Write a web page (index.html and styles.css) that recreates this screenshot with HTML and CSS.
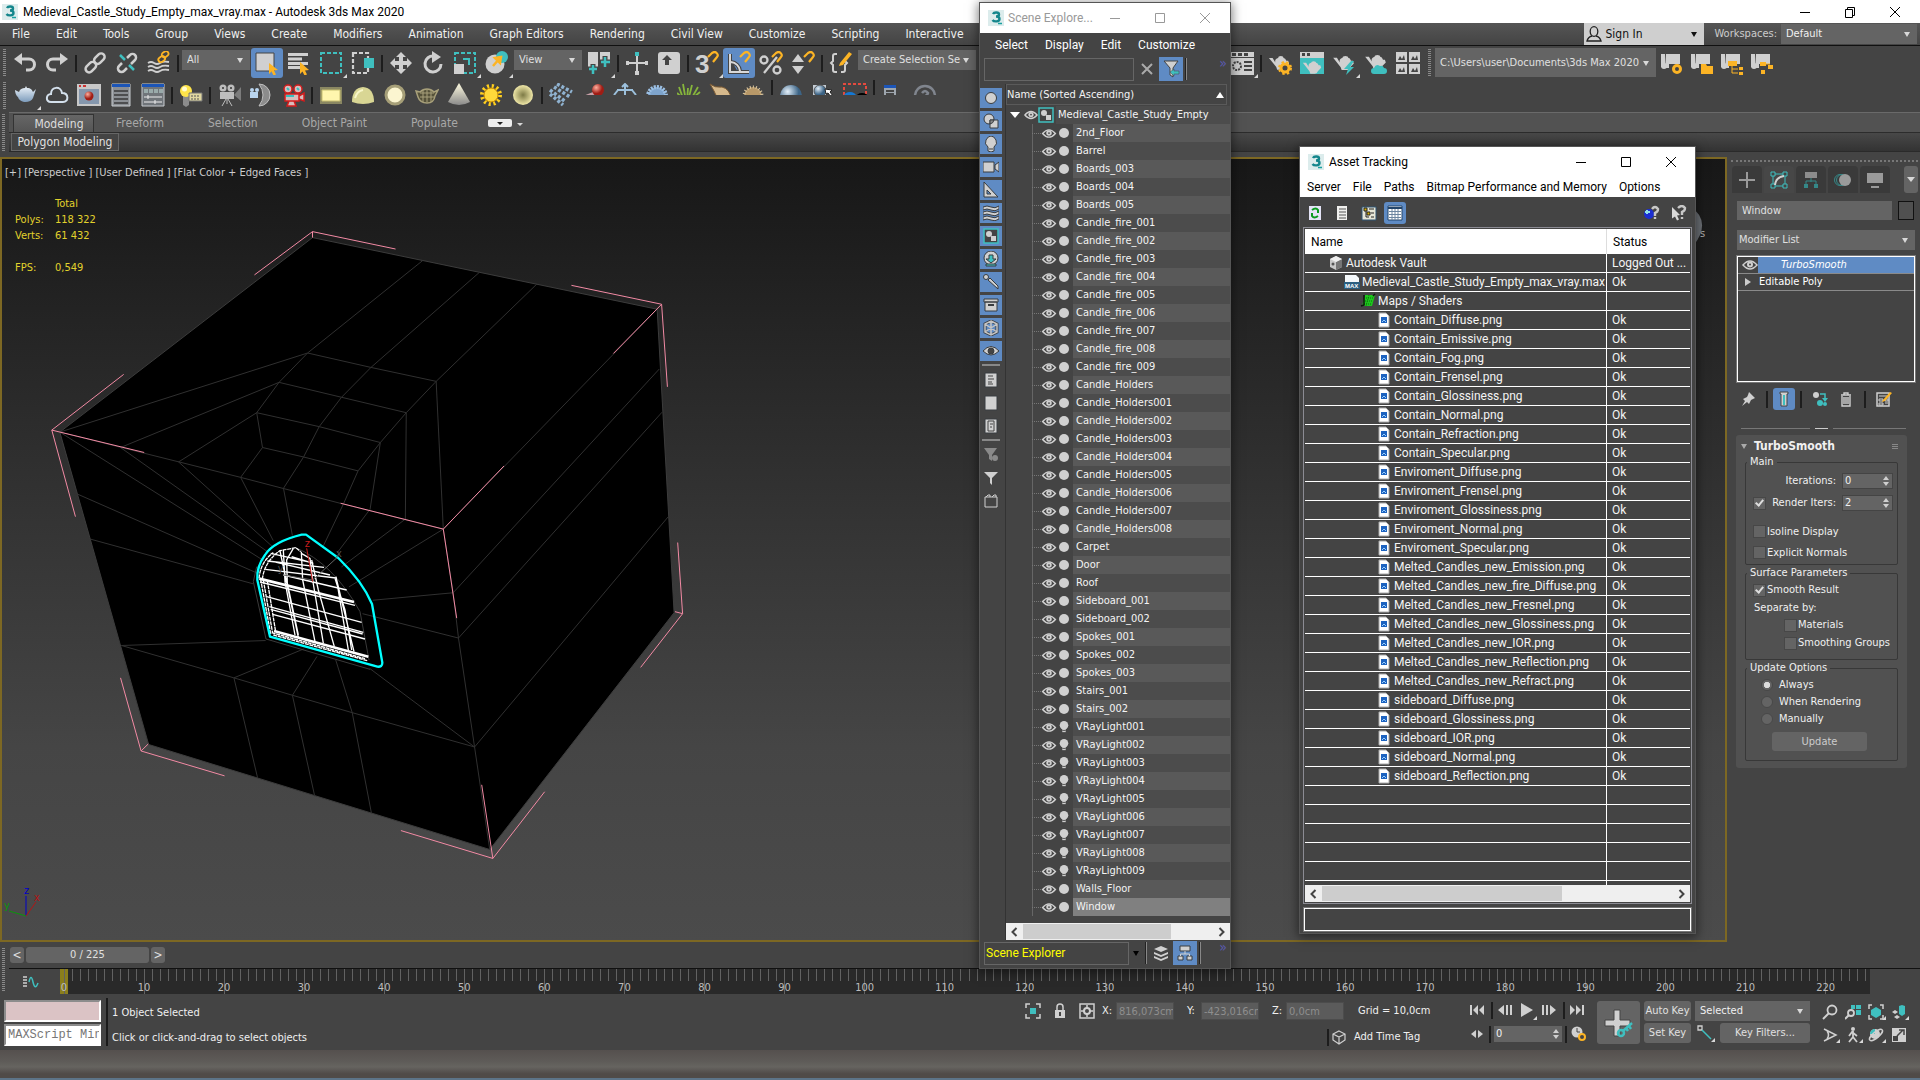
FILE: index.html
```html
<!DOCTYPE html>
<html lang="en">

<head>
    <meta charset="UTF-8">
    <meta name="viewport" content="width=device-width, initial-scale=1.0">
    <title>Medieval_Castle_Study_Empty_max_vray.max - Autodesk 3ds Max 2020</title>
    <link rel="stylesheet" href="styles.css">
</head>

<body>
    <!-- icon sprite -->
    <svg class="sprite" aria-hidden="true">
        <defs>
            <radialGradient id="g-ball" cx="35%" cy="30%"><stop offset="0" stop-color="#e4f0fa"/><stop offset="1" stop-color="#3c6486"/></radialGradient>
            <radialGradient id="g-red" cx="35%" cy="30%"><stop offset="0" stop-color="#ffb0a0"/><stop offset="1" stop-color="#a01c14"/></radialGradient>
            <radialGradient id="g-glow"><stop offset="0" stop-color="#7d7a45"/><stop offset="1" stop-color="#efe7a8"/></radialGradient>
            <linearGradient id="g-cone" x2="0" y2="1"><stop offset="0" stop-color="#fffbe0"/><stop offset="1" stop-color="#8a8a8a"/></linearGradient>
            <linearGradient id="g-metal" x2="0" y2="1"><stop offset="0" stop-color="#eef4fa"/><stop offset="1" stop-color="#7d9cbc"/></linearGradient>
        </defs>
        <symbol id="max" viewBox="0 0 16 16"><rect width="16" height="16" fill="#dcecec"/><path d="M5 4c1-2 6-2 6 .5C11 6 9.500 6.500 8 6.500c2 0 3.500.5 3.500 2.500 0 3-5.500 3-7 1" fill="none" stroke="#14868c" stroke-width="2.400"/><path d="M10 13.500h4" stroke="#1aa0a0" stroke-width="1.500"/></symbol>
        <symbol id="undo" viewBox="0 0 24 24"><path d="M6 8h10a4.500 4.500 0 010 11h-3" fill="none" stroke="#d0d0d0" stroke-width="3"/><path d="M1 8l8-6v12z" fill="#d0d0d0"/></symbol>
        <symbol id="redo" viewBox="0 0 24 24"><path d="M18 8H8a4.500 4.500 0 000 11h3" fill="none" stroke="#d0d0d0" stroke-width="3"/><path d="M23 8l-8-6v12z" fill="#d0d0d0"/></symbol>
        <symbol id="link" viewBox="0 0 24 24"><g fill="none" stroke="#d0d0d0" stroke-width="2.500"><rect x="-5.500" y="-3.500" width="12" height="7" rx="3.500" transform="translate(16 8) rotate(-45)"/><rect x="-5.500" y="-3.500" width="12" height="7" rx="3.500" transform="translate(7.500 16.500) rotate(-45)"/></g></symbol>
        <symbol id="unlink" viewBox="0 0 24 24"><g fill="none" stroke="#d0d0d0" stroke-width="2.500"><path d="M12 7l3-3a3.500 3.500 0 015 5l-4 4M12 17l-3 3a3.500 3.500 0 01-5-5l3-3"/></g><path d="M5 4l5 5M14 14l5 5" stroke="#3fbfbf" stroke-width="2.500"/></symbol>
        <symbol id="bind" viewBox="0 0 24 24"><g fill="none" stroke="#d0d0d0" stroke-width="1.800"><path d="M1 12q3-2 6 0t6 0 9-1M1 16q3-2 6 0t6 0 9-1M1 20q3-2 6 0t6 0 9-1"/></g><g fill="none" stroke="#fcb425" stroke-width="1.800"><rect x="15" y="1" width="7" height="5" rx="2.500" transform="rotate(-35 18 4)"/><rect x="11" y="6" width="7" height="5" rx="2.500" transform="rotate(-35 14 8)"/></g></symbol>
        <symbol id="select" viewBox="0 0 24 24"><path d="M1 2h18v18H1z" fill="#d0d0d0" stroke="#444"/><path d="M14 12l9 7-4 .5 2 4-2.500 1-2-4-2.500 2.500z" fill="#fcb425"/></symbol>
        <symbol id="byname" viewBox="0 0 24 24"><path d="M1 2h20v3H1zM1 6.500h14v3H1zM1 11h20v3H1zM1 15h12v3H1z" fill="#d0d0d0"/><path d="M13 11l9 8-4 .5 2 4-2.500 1-2-4-2.500 2.500z" fill="#fcb425"/></symbol>
        <symbol id="rect" viewBox="0 0 24 24"><path d="M2 2h20v20H2z" fill="none" stroke="#3fbfbf" stroke-width="2" stroke-dasharray="4 2"/></symbol>
        <symbol id="cross" viewBox="0 0 24 24"><path d="M2 2h15v20H2z" fill="none" stroke="#d0d0d0" stroke-width="2.200" stroke-dasharray="4 2"/><path d="M13 7h10v10H13z" fill="#3fbfbf"/></symbol>
        <symbol id="move" viewBox="0 0 24 24"><path d="M12 1l5 5h-3v4h4V7l5 5-5 5v-3h-4v4h3l-5 5-5-5h3v-4H6v3l-5-5 5-5v3h4V6H7z" fill="#d0d0d0"/></symbol>
        <symbol id="rotate" viewBox="0 0 24 24"><path d="M13 5a8 8 0 107 8" fill="none" stroke="#d0d0d0" stroke-width="3"/><path d="M11 0l9 6-9 6z" fill="#d0d0d0"/></symbol>
        <symbol id="scale" viewBox="0 0 24 24"><path d="M2 2h20v20H2z" fill="none" stroke="#3fbfbf" stroke-width="2" stroke-dasharray="4 2"/><path d="M10 8h6v6" fill="none" stroke="#3fbfbf" stroke-width="2"/><path d="M1 13h10v10H1z" fill="#d0d0d0"/></symbol>
        <symbol id="place" viewBox="0 0 24 24"><circle cx="10" cy="13" r="9.500" fill="#d0d0d0"/><circle cx="17" cy="6" r="6" fill="#3fbfbf"/><path d="M8 15l7-8M10 7l6-1-1 6z" stroke="#fcb425" stroke-width="2.500" fill="#fcb425"/></symbol>
        <symbol id="pivot" viewBox="0 0 24 24"><path d="M1 1h10v15H1zM13 1h10v9H13z" fill="#d0d0d0"/><path d="M6 13v10M1 18h10M18 5v12M13 11h10" stroke="#444" stroke-width="5"/><path d="M6 14v9M2 18h8M18 6v10M14 11h9" stroke="#3fbfbf" stroke-width="2.500"/></symbol>
        <symbol id="manip" viewBox="0 0 24 24"><path d="M12 4v16M3 12h18" stroke="#d0d0d0" stroke-width="2"/><path d="M10 20h4v4h-4zM1 10h3v4H1zM20 10h3v4h-3z" fill="#d0d0d0"/><path d="M10 1h4v4h-4z" fill="#3fbfbf"/></symbol>
        <symbol id="keys" viewBox="0 0 24 24"><rect x="1" y="1" width="22" height="22" rx="3" fill="#d0d0d0"/><path d="M10 4l5 5h-3v5H8V9H5z" fill="#444"/></symbol>
        <symbol id="magnet" viewBox="0 0 12 12"><path d="M1 6l4-4c4-3 7 2 5 4l-4 5" fill="none" stroke="#fcb425" stroke-width="2.200"/></symbol>
        <symbol id="angle" viewBox="0 0 24 24"><path d="M3 3v18h19M4 11a10 10 0 019 9M8 20l-5-9" fill="none" stroke="#444" stroke-width="4"/><path d="M3 3v18h19M4 11a10 10 0 019 9" fill="none" stroke="#d8d8d8" stroke-width="2"/><use href="#magnet" x="12" y="0" width="12" height="12"/></symbol>
        <symbol id="percent" viewBox="0 0 24 24"><g fill="none" stroke="#d0d0d0" stroke-width="2.300"><circle cx="5" cy="9" r="3.500"/><circle cx="18" cy="19" r="3.500"/><path d="M18 6L5 22"/></g><use href="#magnet" x="12" y="0" width="12" height="12"/></symbol>
        <symbol id="spinsnap" viewBox="0 0 24 24"><path d="M1 11l6-8 6 8zM1 15h12l-6 8z" fill="#d0d0d0"/><use href="#magnet" x="12" y="0" width="12" height="12"/></symbol>
        <symbol id="braces" viewBox="0 0 24 24"><path d="M8 3H6q-2 0-2 2v5l-2 2 2 2v5q0 2 2 2h2M12 21h2q2 0 2-2v-5l2-2-2-2" fill="none" stroke="#d0d0d0" stroke-width="2"/><path d="M11 12L20 1l3 2-9 11-4 1z" fill="#fcb425"/></symbol>
        <symbol id="rsetup" viewBox="0 0 24 24"><path d="M0 1h24v5H0zM0 7h24v17H0z" fill="#d0d0d0"/><path d="M2 2h4v3H2zM8 2h4v3H8zM14 2h4v3h-4zM14 10h8v2h-8zM14 14h8v2h-8zM14 18h8v2h-8z" fill="#444"/><circle cx="7" cy="15" r="4" fill="none" stroke="#444" stroke-width="2" stroke-dasharray="2 1"/></symbol>
        <symbol id="pot" viewBox="0 0 24 16"><path d="M1 3h4l3 5q-1-4 3-5 0-2 3-2t3 2q2 0 3 3h2l1 3-4 4q-1 3-4 3h-5L9 13z" fill="#d0d0d0"/></symbol>
        <symbol id="potgear" viewBox="0 0 24 24"><use href="#pot" width="22" height="15" y="4"/><circle cx="17" cy="17" r="4" fill="#444" stroke="#fcb425" stroke-width="3"/><circle cx="17" cy="17" r="6" fill="none" stroke="#fcb425" stroke-width="2" stroke-dasharray="2.400"/></symbol>
        <symbol id="potframe" viewBox="0 0 24 24"><path d="M0 1h24v22H0z" fill="#d0d0d0"/><path d="M2 2h3v3H2zM7 2h3v3H7z" fill="#444"/><path d="M0 7h24v16H0z" fill="#3fbfbf"/><use href="#pot" width="20" height="14" x="2" y="9"/></symbol>
        <symbol id="potbolt" viewBox="0 0 24 24"><use href="#pot" width="23" height="15" y="4"/><path d="M19 10l-7 8h4l-2 6 8-8h-4l4-6z" fill="#3fbfbf"/></symbol>
        <symbol id="potcloud" viewBox="0 0 24 24"><use href="#pot" width="23" height="15" y="3"/><path d="M10 23a3 3 0 010-6q2-5 6-2 3-1 4 2a3 3 0 010 6z" fill="#3fbfbf"/></symbol>
        <symbol id="four" viewBox="0 0 24 24"><path d="M0 1h11v10H0zM13 1h11v10H13zM0 13h11v10H0zM13 13h11v10H13z" fill="#d0d0d0"/><path d="M2 9l2-4 2 3 2-4 1 5zM15 9l2-4 2 3 2-4 1 5zM2 21l2-4 2 3 2-4 1 5zM15 21l2-4 2 3 2-4 1 5z" fill="#444"/></symbol>
        <symbol id="scroll" viewBox="0 0 24 24"><path d="M1 3h4v13h-4zM6 3h14v10H9v4H5z" fill="#d0d0d0"/><circle cx="4" cy="15" r="3" fill="#d0d0d0"/></symbol>
        <symbol id="pgear" viewBox="0 0 24 24"><use href="#scroll"/><circle cx="17" cy="18" r="3.500" fill="#444" stroke="#fcb425" stroke-width="3"/></symbol>
        <symbol id="pfolder" viewBox="0 0 24 24"><use href="#scroll"/><path d="M11 13h5l1 2h6v8H11z" fill="#fcb425"/></symbol>
        <symbol id="ptree" viewBox="0 0 24 24"><use href="#scroll"/><path d="M8 10h9v5H8zM19 16h4v3h-4zM19 21h4v3h-4z" fill="#fcb425"/><path d="M12 14v8h6M12 18h6" fill="none" stroke="#fcb425"/></symbol>
        <symbol id="pflow" viewBox="0 0 24 24"><use href="#scroll"/><path d="M10 11h6v4h-6zM18 14h5v4h-5zM11 19h4v4h-4z" fill="#fcb425"/><path d="M16 13h4" stroke="#fcb425"/></symbol>
        <symbol id="vpot" viewBox="0 0 24 24"><path d="M2 7l4 2c1-3 3-4 6-4l1-2 1 2c4 0 5 2 6 4l3-3-3 9c-2 5-13 6-15-1C3 13 2 9 2 7z" fill="url(#g-metal)"/></symbol>
        <symbol id="vcloud" viewBox="0 0 24 24"><path d="M6 19c-6 0-5-8 0-8 0-8 10-8 11-1 7 0 7 9 1 9z" fill="none" stroke="#d4e0ec" stroke-width="2"/></symbol>
        <symbol id="vfb" viewBox="0 0 24 24"><path d="M0 1h24v22H0z" fill="#c8c8c8"/><path d="M2 6h20v15H2z" fill="#8597ad"/><path d="M2 2h2v2H2zM6 2h3v2H6z" fill="#c33"/><circle cx="12" cy="13" r="4.500" fill="url(#g-red)"/></symbol>
        <symbol id="vpanel" viewBox="0 0 24 24"><path d="M3 1h18v22H3z" fill="#8b8f94" stroke="#c8ccd0"/><path d="M3 1h18v3H3z" fill="#1b55b8"/><path d="M5 8h14M5 12h14M5 16h14M5 20h14" stroke="#3a3a3a" stroke-width="1.500"/></symbol>
        <symbol id="vpanel2" viewBox="0 0 24 24"><path d="M1 1h22v22H1z" fill="#70757a" stroke="#c8ccd0"/><path d="M1 1h22v3H1z" fill="#1b55b8"/><path d="M3 6h4v4H3zM8 6h4v4H8zM13 6h4v4h-4zM18 6h4v4h-4z" fill="#9aa"/><path d="M3 14h18M3 19h18M7 12v4M14 17v4" stroke="#eee"/></symbol>
        <symbol id="vbulb" viewBox="0 0 24 24"><path d="M4 12h6v10l-3 2-3-2z" fill="#8c8c8c"/><circle cx="7" cy="8" r="6" fill="#ffe54a"/><circle cx="5.500" cy="6" r="2.500" fill="#fffbd0"/><path d="M10 10h13v8H10z" fill="#e0d7a0" stroke="#777"/><path d="M12 13h9M12 16h9" stroke="#555" stroke-dasharray="2 1"/></symbol>
        <symbol id="vcam" viewBox="0 0 24 24"><g fill="#bdbdbd"><circle cx="6" cy="5" r="3.500"/><circle cx="14" cy="5" r="3.500"/><path d="M3 9h14v7H3z"/></g><path d="M17 12l7-8v14z" fill="#7c7c7c"/><path d="M9 16l-4 7M10 16v5M11 16l4 7" stroke="#bdbdbd"/><circle cx="6" cy="5" r="1" fill="#333"/><circle cx="14" cy="5" r="1" fill="#333"/></symbol>
        <symbol id="vdome" viewBox="0 0 24 24"><path d="M10 1a11 11 0 010 22q8-11 0-22z" fill="#8c8c8c" stroke="#c0c0c0"/><path d="M1 9h8v6H1z" fill="#b9d4ee"/><circle cx="3" cy="7" r="2" fill="#b9d4ee"/><circle cx="8" cy="7" r="2" fill="#b9d4ee"/></symbol>
        <symbol id="vcam3d" viewBox="0 0 24 24"><g fill="#d8bcbc" stroke="#d31c1c" stroke-width="1.500"><path d="M4 11h14v7H4zM18 13l5-3v8l-5-2M8 18l-2 5h9l-2-5"/><circle cx="7" cy="6" r="4"/><circle cx="17" cy="6" r="4"/></g><path d="M5 13h8M6 5l2 2M16 5l2 2" stroke="#35c0c0" stroke-width="2"/></symbol>
        <symbol id="lrect" viewBox="0 0 24 24"><path d="M1 4h22v17H1z" fill="#8a8762"/><path d="M3 7h18v11H3z" fill="#fff6ae" stroke="#c8bf70"/></symbol>
        <symbol id="ldome" viewBox="0 0 24 24"><path d="M1 19Q1 5 12 4q11 1 11 15-11 4-22 0z" fill="#d9d694"/><path d="M4 15Q6 8 12 7" stroke="#f8f6c8" stroke-width="2" fill="none"/></symbol>
        <symbol id="lball" viewBox="0 0 24 24"><circle cx="12" cy="12" r="9" fill="#fbf5d0" stroke="#a69f78" stroke-width="3"/></symbol>
        <symbol id="lmesh" viewBox="0 0 24 24"><path d="M1 8l4 1q3-3 7-3t7 3l4-2-3 6q-1 7-8 7t-9-6z" fill="#56523a" stroke="#a8a07a" stroke-width="1.500"/><path d="M5 10h14M5 14h14M8 7v12M12 6v13M16 7v12" stroke="#a8a07a"/></symbol>
        <symbol id="lies" viewBox="0 0 24 24"><path d="M12 0l11 19q-11 6-22 0z" fill="url(#g-cone)"/></symbol>
        <symbol id="lsun" viewBox="0 0 24 24"><circle cx="12" cy="12" r="8.500" fill="none" stroke="#ffcf1f" stroke-width="5" stroke-dasharray="2 2.500"/><circle cx="12" cy="12" r="7" fill="#ffd83a" stroke="#c98a00"/></symbol>
        <symbol id="lamb" viewBox="0 0 24 24"><circle cx="12" cy="12" r="10" fill="url(#g-glow)"/></symbol>
        <symbol id="iblocks" viewBox="0 0 24 24"><g fill="none" stroke="#8fb2d0" stroke-width="3.500" stroke-dasharray="3 2"><path d="M1 7l16 12M5 4l16 10M8 1l15 8M1 11l13 11"/></g></symbol>
        <symbol id="ipivot" viewBox="0 0 24 24"><path d="M2 13l10-4 4 4-8 6z" fill="#c8a0a8"/><circle cx="17" cy="7" r="6" fill="url(#g-red)"/></symbol>
        <symbol id="iplane" viewBox="0 0 24 24"><path d="M12 1v20M9 4l3-3 3 3M4 7h16M1 12l4-5M23 12l-4-5" fill="none" stroke="#9cc0dc" stroke-width="2"/></symbol>
        <symbol id="ipom" viewBox="0 0 24 24"><circle cx="12" cy="13" r="9" fill="#7ea4cc" stroke="#9cc0e4" stroke-width="4" stroke-dasharray="2 1"/></symbol>
        <symbol id="igrass" viewBox="0 0 24 24"><path d="M2 4l5 14M6 1l3 17M11 5l-1 13M15 2l-4 16M21 4l-8 14M23 9L12 18M0 10l9 8" stroke="#86b53c" stroke-width="1.800"/></symbol>
        <symbol id="ihorn" viewBox="0 0 24 24"><path d="M1 1q5 4 12 3 8 2 9 12-14 3-17-8z" fill="#d6b98c" stroke="#7a5a34"/></symbol>
        <symbol id="ihair" viewBox="0 0 24 24"><circle cx="12" cy="13" r="9" fill="#b89868" stroke="#dcc8a0" stroke-width="3" stroke-dasharray="1 2"/></symbol>
        <symbol id="iball" viewBox="0 0 24 24"><circle cx="12" cy="13" r="11" fill="url(#g-ball)"/></symbol>
        <symbol id="izoom" viewBox="0 0 24 24"><path d="M2 2h13v20H2z" fill="#c4ccd4"/><circle cx="9" cy="8" r="6" fill="url(#g-ball)" stroke="#555"/><path d="M14 6l7 1-2 2 3 4-2 1-3-4-2 1z" fill="#fff" stroke="#222"/></symbol>
        <symbol id="iregion" viewBox="0 0 24 24"><path d="M1 22V1h22v21" fill="none" stroke="#e34a3f" stroke-width="2" stroke-dasharray="3 2"/><ellipse cx="7" cy="13" rx="6" ry="4" fill="#1478d4"/><ellipse cx="19" cy="14" rx="6" ry="4"/></symbol>
        <symbol id="iset" viewBox="0 0 24 24"><path d="M3 2h12v20H3z" fill="#9ea6ae"/><path d="M3 2h12v3H3z" fill="#1b55b8"/><path d="M5 8h8M5 11h8M17 13h6" stroke="#444" stroke-width="2"/></symbol>
        <symbol id="ihelp" viewBox="0 0 24 24"><circle cx="12" cy="13" r="10" fill="none" stroke="#80858e" stroke-width="2.500"/><path d="M9 10q3-4 6 0-1 3-3 3" fill="none" stroke="#80858e" stroke-width="2.500"/></symbol>
        <symbol id="user" viewBox="0 0 16 16"><ellipse cx="8" cy="5.500" rx="3.800" ry="4.800" fill="none" stroke="#222" stroke-width="1.300"/><path d="M6 10q-4 1-5 5h14q-1-4-5-5" fill="none" stroke="#222" stroke-width="1.300"/></symbol>
        <!-- explorer -->
        <symbol id="eye" viewBox="0 0 16 12"><path d="M1 6q7-8 14 0-7 8-14 0z" fill="none" stroke="#d0d0d0" stroke-width="1.500"/><circle cx="8" cy="5.500" r="3" fill="#d0d0d0"/><circle cx="8" cy="5.500" r="1" fill="#444"/></symbol>
        <symbol id="dot" viewBox="0 0 12 12"><circle cx="6" cy="6" r="5" fill="#d0d0d0"/></symbol>
        <symbol id="lamp" viewBox="0 0 12 14"><circle cx="6" cy="5" r="5" fill="#d0d0d0"/><path d="M4 9h4v4H4z" fill="#d0d0d0"/><path d="M4 11h4" stroke="#444"/></symbol>
        <symbol id="shapes" viewBox="0 0 16 16"><path d="M1 1h14v14H1z" fill="#444" stroke="#3fbfbf" stroke-width="1.500"/><g fill="#d0d0d0" stroke="none"><circle cx="6" cy="6" r="3"/><path d="M8 8h5v5H8z"/></g></symbol>
        <symbol id="e1" viewBox="0 0 16 16"><circle cx="8" cy="8" r="5.500"/></symbol>
        <symbol id="e2" viewBox="0 0 16 16"><circle cx="6" cy="6" r="5"/><path d="M7 7h8v8H7z"/><path d="M7 11a5 5 0 004-4H7z" fill="#8a8a8a"/></symbol>
        <symbol id="e3" viewBox="0 0 16 16"><path d="M5 11Q1 8 3 4q2-4 5-4t5 4q2 4-2 7v4q-3 2-6 0z"/><path d="M6 13h4"/></symbol>
        <symbol id="e4" viewBox="0 0 16 16"><path d="M0 3h11v10H0zM12 6l4-3v10l-4-3z"/></symbol>
        <symbol id="e5" viewBox="0 0 16 16"><path d="M1 0l14 15H1z"/><path d="M4 8l4 4H4z" fill="#5f8bc4"/></symbol>
        <symbol id="e6" viewBox="0 0 16 16"><path d="M0 2q4-2 8 0t8-1v3q-4 3-8 1T0 5zM0 7q4-2 8 0t8-1v3q-4 3-8 1t-8 0zM0 12q4-2 8 0t8-1v3q-4 3-8 1t-8 0z"/></symbol>
        <symbol id="e8" viewBox="0 0 16 16"><circle cx="8" cy="7" r="7"/><path d="M6 4h4v4h3l-5 4-5-4h3zM3 13h10v2H3z" fill="#3fbfbf"/></symbol>
        <symbol id="e9" viewBox="0 0 16 16"><circle cx="3" cy="3" r="2.500"/><path d="M5 6l2-2 8 8v3z"/></symbol>
        <symbol id="e10" viewBox="0 0 16 16"><path d="M1 2h14v3H1zM2 5h12v9H2z"/><path d="M5 8h6" stroke-width="2"/></symbol>
        <symbol id="e11" viewBox="0 0 16 16"><path d="M8 1l6 3v8l-6 3-6-3V4z" fill="none" stroke-width="3"/><path d="M8 1v14M2 4l12 8M2 12l12-8M8 1l6 3v8l-6 3-6-3V4z" fill="none" stroke="#c4c4c4" stroke-width="1.500"/></symbol>
        <symbol id="e12" viewBox="0 0 16 16"><path d="M0 8q8-9 16 0-8 8-16 0z"/><circle cx="8" cy="8" r="3" fill="#444"/></symbol>
        <symbol id="p1" viewBox="0 0 16 16"><path d="M2 1h12v14H2z" fill="#d0d0d0"/><path d="M5 4h5M5 7h6M5 10h4M5 12h5" stroke="#444"/></symbol>
        <symbol id="p2" viewBox="0 0 16 16"><path d="M2 1h12v14H2z" fill="#d0d0d0"/></symbol>
        <symbol id="p3" viewBox="0 0 16 16"><path d="M2 1h12v14H2z" fill="#d0d0d0"/><path d="M5 3h6v10H5zM7 6h3M7 9h2" fill="none" stroke="#444"/></symbol>
        <symbol id="p4" viewBox="0 0 16 16"><path d="M1 1h13L9 8v6L6 12V8z" fill="#8a8a8a" stroke="none"/><circle cx="12" cy="11" r="3" fill="#8a8a8a" stroke="none"/></symbol>
        <symbol id="p5" viewBox="0 0 16 16"><path d="M1 2h14L9 8v7l-2-2V8z" fill="#d0d0d0" stroke="none"/></symbol>
        <symbol id="p6" viewBox="0 0 16 16"><path d="M2 4h12v10H2zM3 4l2-2h2v2M9 4l2-2h2v2" fill="none" stroke="#d0d0d0"/></symbol>
        <symbol id="funnel" viewBox="0 0 18 18"><path d="M2 1h14L11 8v9l-3-2V8z" fill="#d0d0d0" stroke="#444"/><path d="M8 12l4-3v2h5v3h-5v2z" fill="#3fbfbf" stroke="#444" stroke-width=".5"/></symbol>
        <symbol id="layers" viewBox="0 0 16 16"><path d="M8 1l7 3-7 3-7-3zM1 7l7 3 7-3v2l-7 3-7-3zM1 11l7 3 7-3v2l-7 3-7-3z" fill="#d0d0d0"/></symbol>
        <symbol id="hier" viewBox="0 0 16 16"><path d="M3 1h10v5H3zM1 11h5v4H1zM10 11h5v4h-5z" fill="#d0d0d0" stroke="#383c40"/><path d="M8 6v3M3.500 11V9h9v2" fill="none" stroke="#d0d0d0"/></symbol>
        <!-- asset tracking -->
        <symbol id="refresh" viewBox="0 0 16 16"><path d="M2 1h12v14H2z" fill="#e4e4f6"/><path d="M5 5q4-3 6 0v3M11 11q-4 3-6 0V8" fill="none" stroke="#0a9a1e" stroke-width="2"/></symbol>
        <symbol id="doc" viewBox="0 0 16 16"><path d="M3 1h10v14H3z" fill="#f0f0ee"/><path d="M5 4h7M5 7h7M5 10h7M5 13h7" stroke="#555"/></symbol>
        <symbol id="treeview" viewBox="0 0 16 16"><path d="M1 2h14v13H1z" fill="#e6e6d8" stroke="#2e5574"/><path d="M3 3h3v3H3zM6 7h3v3H6z" fill="#d8b000" stroke="#222"/><path d="M8 4h5M10 8h3M10 12h3M5 6v6h3" stroke="#222" fill="none"/></symbol>
        <symbol id="grid" viewBox="0 0 16 16"><path d="M1 1h14v14H1z" fill="#fff" stroke="#24466c"/><path d="M1 3h14" stroke="#24466c" stroke-width="2"/><path d="M2 6.500h12M2 9.500h12M2 12.500h12M5 4v11M8 4v11M11 4v11" stroke="#6e86a0"/></symbol>
        <symbol id="qglobe" viewBox="0 0 16 16"><circle cx="5" cy="9" r="5" fill="#1c2fd0"/><path d="M3 5v4M1 7h5" stroke="#8fe0e8" stroke-width="2"/><path d="M8 4q3-4 6 0 0 3-3 4v3M11 12v2" fill="none" stroke="#c8c8c8" stroke-width="2.400"/></symbol>
        <symbol id="qarrow" viewBox="0 0 16 16"><path d="M1 2l8 8-3 .5 2 4-2 1-2-4-3 2z" fill="#d8d8d8"/><path d="M7 3q4-4 7 0 0 3-3 4v3M11 12v2" fill="none" stroke="#c8c8c8" stroke-width="2.400"/></symbol>
        <symbol id="vault" viewBox="0 0 16 16"><path d="M2 4l6-3 6 3v8l-6 3-6-3z" fill="#c9c9c9"/><path d="M8 7l6-3v8l-6 3z" fill="#767676"/><path d="M2 4l6 3 6-3-6-3z" fill="#efefef"/><circle cx="5" cy="9" r="1.500" fill="#555"/></symbol>
        <symbol id="maps" viewBox="0 0 16 16"><path d="M5 2h10l-3 11H2z" fill="#1cc71c"/><path d="M6 5h8M5 8h8M4 11h8M9 2L6 13" stroke="#0c6c0c" stroke-dasharray="1 1"/><path d="M4 2v10l-3 1M13 3l2-2" stroke="#111" fill="none" stroke-width="1.500"/></symbol>
        <symbol id="png" viewBox="0 0 16 16"><path d="M3 1h7l3 3v11H3z" fill="#fff" stroke="#a8a8a8"/><path d="M5 5h6v6H5z" fill="#1d63c0"/><path d="M6 10l2-2 2 2" stroke="#9ad0ff" fill="none"/></symbol>
        <!-- command panel -->
        <symbol id="plus" viewBox="0 0 18 18"><path d="M9 1v16M1 9h16" stroke="#9a9a9a" stroke-width="2"/></symbol>
        <symbol id="modify" viewBox="0 0 18 18"><path d="M3 3h12v12H3z" fill="none" stroke="#3fbfbf"/><path d="M1 1h4v4H1zM13 1h4v4h-4zM1 13h4v4H1zM13 13h4v4h-4z" fill="#444" stroke="#3fbfbf"/><path d="M5 14q1-8 9-9" fill="none" stroke="#d0d0d0" stroke-width="2"/></symbol>
        <symbol id="chier" viewBox="0 0 18 18"><path d="M3 1h12v6H3z" fill="#8c8c8c"/><path d="M9 7v4M4 14v-4h10v4" fill="none" stroke="#358888"/><path d="M2 13h4v4H2zM12 13h4v4h-4z" fill="#358888"/></symbol>
        <symbol id="motion" viewBox="0 0 18 18"><circle cx="6" cy="9" r="5.500" fill="none" stroke="#358888"/><circle cx="8" cy="9" r="5.500" fill="none" stroke="#358888"/><circle cx="11" cy="9" r="6" fill="#9a9a9a"/></symbol>
        <symbol id="display" viewBox="0 0 18 18"><path d="M1 2h16v10H1zM5 15h8v2H5z" fill="#9a9a9a"/></symbol>
        <symbol id="pin" viewBox="0 0 16 16"><path d="M9 1l6 6-2 1-2 1-2 4-2-2-5 4 3-5-2-2 4-2 1-2z" fill="#d0d0d0"/></symbol>
        <symbol id="tube" viewBox="0 0 16 16"><path d="M4 1h8v2h-1v12H5V3H4z" fill="#d0d0d0" stroke="#444"/><path d="M7 4h2v10H7z" fill="#3fbfbf"/></symbol>
        <symbol id="unique" viewBox="0 0 16 16"><circle cx="4" cy="4" r="3" fill="#d0d0d0"/><circle cx="8" cy="12" r="3" fill="#3fbfbf"/><path d="M8 3h5v5" fill="none" stroke="#3fbfbf" stroke-width="1.500"/><path d="M10 7h6l-3 4z" fill="#3fbfbf"/><circle cx="13" cy="13" r="2" fill="#3fbfbf"/></symbol>
        <symbol id="trash" viewBox="0 0 16 16"><path d="M3 4h10M6 4V2h4v2M4 5v10h8V5M6 6v7M8 6v7M10 6v7" fill="none" stroke="#d0d0d0" stroke-width="1.400"/></symbol>
        <symbol id="config" viewBox="0 0 16 16"><path d="M1 2h12v13H1z" fill="none" stroke="#d0d0d0" stroke-width="1.500"/><path d="M3 5h8M3 8h4v2H3zM9 8h3v2H9zM3 12h4v2H3zM9 12h3" fill="none" stroke="#d0d0d0"/><path d="M7 9l7-8 2 1-7 8-3 1z" fill="#fcb425"/></symbol>
        <symbol id="spin" viewBox="0 0 8 12"><path d="M1 5l3-4 3 4zM1 7h6l-3 4z" fill="#d0d0d0"/></symbol>
        <!-- status bar -->
        <symbol id="curve" viewBox="0 0 20 16"><path d="M1 3h4M1 6h4M1 9h4M1 12h4" stroke="#d0d0d0" stroke-width="1.500"/><path d="M7 8q2-9 4 0t5 1" fill="none" stroke="#3fbfbf" stroke-width="1.500"/></symbol>
        <symbol id="isolate" viewBox="0 0 16 16"><path d="M1 5V1h4M11 1h4v4M15 11v4h-4M5 15H1v-4" fill="none" stroke="#d0d0d0" stroke-width="1.500"/><path d="M5 5h6v6H5z" fill="#3fbfbf"/></symbol>
        <symbol id="lock" viewBox="0 0 16 16"><path d="M5 7V4q0-3 3-3t3 3v3" fill="none" stroke="#d0d0d0" stroke-width="1.500"/><path d="M3 7h10v8H3z" fill="#d0d0d0"/><path d="M8 9v4" stroke="#444" stroke-width="2"/></symbol>
        <symbol id="abs" viewBox="0 0 16 16"><path d="M1 1h14v14H1z" fill="none" stroke="#d0d0d0" stroke-width="1.500"/><circle cx="8" cy="8" r="3" fill="none" stroke="#d0d0d0" stroke-width="2"/><path d="M8 2v3M8 11v3M2 8h3M11 8h3" stroke="#d0d0d0" stroke-width="1.500"/></symbol>
        <symbol id="cube" viewBox="0 0 16 16"><path d="M8 2l6 3v6l-6 4-6-4V5zM2 5l6 3 6-3M8 8v7" fill="none" stroke="#d0d0d0" stroke-width="1.200"/></symbol>
        <symbol id="first" viewBox="0 0 16 16"><path d="M1 3h2v10H1zM9 3v10L4 8zM15 3v10l-5-5z" fill="#d0d0d0"/></symbol>
        <symbol id="prev" viewBox="0 0 16 16"><path d="M7 3v10L1 8zM9 3h2v10H9zM13 3h2v10h-2z" fill="#d0d0d0"/></symbol>
        <symbol id="play" viewBox="0 0 16 16"><path d="M2 1l12 7-12 7z" fill="#d0d0d0"/></symbol>
        <symbol id="next" viewBox="0 0 16 16"><path d="M9 3v10l6-5zM5 3h2v10H5zM1 3h2v10H1z" fill="#d0d0d0"/></symbol>
        <symbol id="last" viewBox="0 0 16 16"><path d="M13 3h2v10h-2zM7 3v10l5-5zM1 3v10l5-5z" fill="#d0d0d0"/></symbol>
        <symbol id="keymode" viewBox="0 0 16 16"><path d="M7 4v8L2 8zM9 4v8l5-4z" fill="#d0d0d0"/></symbol>
        <symbol id="clock" viewBox="0 0 16 16"><circle cx="6" cy="6" r="5.500" fill="#d0d0d0"/><path d="M6 2v4h3" stroke="#444" fill="none"/><circle cx="11" cy="11" r="3" fill="#444" stroke="#fcb425" stroke-width="2"/></symbol>
        <symbol id="setkey" viewBox="0 0 30 30"><path d="M10 2h6v10h10v6H16v10h-6V18H1v-6h9z" fill="#d0d0d0" stroke="#444"/><g fill="none" stroke="#3fbfbf" stroke-width="2.500"><circle cx="17" cy="25" r="3"/><path d="M19 23l9-8M25 18l2 3M22 20l2 3"/></g></symbol>
        <symbol id="tangent" viewBox="0 0 16 16"><path d="M1 1h4v4H1z" fill="none" stroke="#d0d0d0" stroke-width="1.300"/><path d="M5 5l9 9" stroke="#3fbfbf" stroke-width="1.500"/></symbol>
        <symbol id="mag" viewBox="0 0 16 16"><circle cx="10" cy="6" r="4.500" fill="none" stroke="#d0d0d0" stroke-width="1.800"/><path d="M7 9l-6 6" stroke="#d0d0d0" stroke-width="2"/></symbol>
        <symbol id="magall" viewBox="0 0 16 16"><circle cx="6" cy="9" r="3" fill="none" stroke="#d0d0d0" stroke-width="1.800"/><path d="M4 11l-4 4" stroke="#d0d0d0" stroke-width="2"/><path d="M6 1h4v4H6zM11 1h5v4h-5zM11 6h5v5h-5z" fill="#3fbfbf"/></symbol>
        <symbol id="extents" viewBox="0 0 16 16"><path d="M1 5V1h3M12 1h3v4M15 11v4h-3M4 15H1v-4" fill="none" stroke="#d0d0d0" stroke-width="1.500"/><path d="M8 3l5 3v5l-5 3-5-3V6z" fill="#3fbfbf"/></symbol>
        <symbol id="extall" viewBox="0 0 16 16"><path d="M8 2l3-1 3 1v8l-3 2-3-2z" fill="#3fbfbf"/><path d="M4 6l3 2-3 2-3-2zM6 11l3 2-3 2-3-2z" fill="#d0d0d0"/></symbol>
        <symbol id="fov" viewBox="0 0 16 16"><path d="M2 2l12 6-12 6M5 4q3 4 0 8" fill="none" stroke="#d0d0d0" stroke-width="1.500"/></symbol>
        <symbol id="walk" viewBox="0 0 16 16"><circle cx="8" cy="2" r="2" fill="#d0d0d0"/><path d="M8 4v6l-4 5M8 10l4 5M4 9l3-4 5 4" fill="none" stroke="#d0d0d0" stroke-width="1.800"/></symbol>
        <symbol id="orbit" viewBox="0 0 16 16"><circle cx="7" cy="7" r="5" fill="#d0d0d0"/><path d="M7 7V2a5 5 0 00-5 5z" fill="#3fbfbf"/><ellipse cx="8" cy="8" rx="8" ry="3" fill="none" stroke="#d0d0d0" stroke-width="1.500" transform="rotate(-40 8 8)"/></symbol>
        <symbol id="maxi" viewBox="0 0 16 16"><path d="M1 1h14v14H1z" fill="#d0d0d0"/><path d="M2 9h5v5H2z" fill="#444"/><path d="M6 9l6-6M8 3h5v5" fill="none" stroke="#444" stroke-width="1.500"/></symbol>
    </svg>

    <header class="titlebar">
        <svg class="i16"><use href="#max"/></svg>
        <span class="caption">Medieval_Castle_Study_Empty_max_vray.max - Autodesk 3ds Max 2020</span>
        <div class="winbtns">
            <button aria-label="Minimize"><svg viewBox="0 0 12 12"><path d="M1 6.500h10"/></svg></button>
            <button aria-label="Restore"><svg viewBox="0 0 12 12"><path d="M1.500 3.500h7v8h-7zM3.500 3.500v-2h7v8h-2"/></svg></button>
            <button aria-label="Close"><svg viewBox="0 0 12 12"><path d="M1 1l10 10M11 1L1 11"/></svg></button>
        </div>
    </header>

    <nav class="menubar">
        <a href="#">File</a><a href="#">Edit</a><a href="#">Tools</a><a href="#">Group</a><a href="#">Views</a><a href="#">Create</a><a href="#">Modifiers</a><a href="#">Animation</a><a href="#">Graph Editors</a><a href="#">Rendering</a><a href="#">Civil View</a><a href="#">Customize</a><a href="#">Scripting</a><a href="#">Interactive</a>
        <button class="signin"><svg class="i16"><use href="#user"/></svg><span>Sign In</span><i class="caret"></i></button>
        <label for="workspace">Workspaces:</label>
        <span class="drop workspace"><select id="workspace"><option>Default</option></select></span>
    </nav>

    <div class="toolbar" id="main-toolbar">
        <i class="grip"></i>
        <div class="tools" data-icons="undo redo | link unlink bind |"></div>
        <span class="drop filter"><select aria-label="Selection filter"><option>All</option></select></span>
        <div class="tools" data-icons="select* byname rect+ cross | move rotate scale+ place+"></div>
        <span class="drop filter"><select aria-label="Coordinate system"><option>View</option></select></span>
        <div class="tools" data-icons="pivot+ | manip keys | snap3+ angle* percent spinsnap | braces"></div>
        <span class="drop sets"><select aria-label="Named selection sets"><option>Create Selection Se</option></select></span>
        <div class="tools render" data-icons="rsetup+ | potgear potframe potbolt+ potcloud four"></div>
        <i class="grip"></i>
        <span class="drop path"><select aria-label="Project folder"><option>C:\Users\user\Documents\3ds Max 2020</option></select></span>
        <div class="tools project" data-icons="pgear pfolder ptree pflow"></div>
    </div>

    <div class="toolbar vray">
        <i class="grip"></i>
        <div class="tools" data-icons="vpot+ vcloud vfb vpanel vpanel2 | vbulb | vcam vdome vcam3d | lrect ldome lball lmesh lies lsun lamb | iblocks"></div>
        <div class="tools cut" data-icons="ipivot iplane ipom igrass ihorn ihair | iball izoom iregion | iset ihelp"></div>
    </div>

    <div class="ribbon">
        <i class="grip"></i>
        <div class="ribbon-body">
            <div class="ribbon-tabs">
                <button class="active">Modeling</button><button>Freeform</button><button>Selection</button><button>Object Paint</button><button>Populate</button>
                <i class="pill"><i class="caret"></i></i><i class="caret"></i>
            </div>
            <div class="ribbon-panel"><button>Polygon Modeling</button></div>
        </div>
    </div>

    <main class="workspace-area">
        <section class="viewport">
            <p class="vp-label">[+] [Perspective ] [User Defined ] [Flat Color + Edged Faces ]</p>
            <dl class="stats">
                <dt></dt><dd>Total</dd>
                <dt>Polys:</dt><dd>118 322</dd>
                <dt>Verts:</dt><dd>61 432</dd>
                <dt></dt><dd></dd>
                <dt>FPS:</dt><dd>0,549</dd>
            </dl>
            <svg class="model" viewBox="0 14 1568 1578" preserveAspectRatio="none">
                <path class="solid" d="M700 176L1472 320 1510 930 1097 1406 333 1195 134 567z"/>
                <path class="wire" d="M947 222L689 408 625 467 575 528 588 598 539 658 612 785M1075 245L831 437 765 497 715 556 680 617 635 680 655 775M1203 269L977 465 910 528 852 588 802 645 770 710 722 800
                    M689 408L831 437 977 465M625 467L765 497 910 528M575 528L715 556 852 588M588 598L680 617 802 645M134 567L689 408M270 598L625 467M400 627L575 528M977 465L993 762M910 528L908 742M852 588L829 722L755 810
                    M134 567L539 658 770 712 993 762L1472 320M134 567L590 825M270 598L600 808M400 627L610 797M172 691L575 850M202 782L567 872M908 742L765 838M993 762L782 878M1015 890L835 905M1027 981L812 932
                    M272 996L595 986M272 996L524 1061 655 1096 789 1131 1063 1200M524 1061L680 1003M655 1096L710 1018M789 1131L752 1025M1063 1200L828 1042M524 1061L577 1262M655 1096L705 1299M789 1131L832 1333
                    M993 762L1015 890 1027 981 1063 1200 1097 1406M1015 890L1477 440M1027 981L1483 527M1063 1200L1497 737"/>
                <path class="bracket" d="M570 251L700 164 886 199M700 164V176M1280 272L1482 310 1374 409M1482 310L1495 476M277 451L116 563 323 608M116 563L169 737M763 710L993 762 1129 635M993 762L1023 941
                    M1518 789L1529 932 1435 1040M1529 932L1512 928M270 1061L316 1208 503 1258M316 1208L332 1194M1079 1276L1104 1424 1220 1290M1104 1424L898 1368"/>
            </svg>
            <svg class="castle-window" viewBox="0 0 540 570">
                <path d="M70 245L108 417 420 508M70 245L80 200M195 142Q310 190 390 335L417 480" fill="none" stroke="#3a3a3a" stroke-width="3"/>
                <g fill="none" stroke="#fff" stroke-width="4">
                    <path d="M87 235Q92 185 130 158M97 238Q103 185 150 152L197 143 212 155M100 240L128 400M112 242L137 396M92 238L122 402M130 405L412 482M125 398L405 476" stroke-dasharray="12 2"/>
                    <path d="M122 160L245 188M112 183L282 202M106 208L318 234M185 170L250 190M130 185L300 225M160 225L350 270M110 290L395 367M118 320L400 397M122 328L398 402M128 343L405 417"/>
                    <path d="M150 153L205 412M160 150L165 245 195 405M190 145L170 180 172 250 205 405M214 155L218 240 255 425M214 160L240 175 248 240 275 400 280 430M245 180L265 270 313 440M320 240L372 455M315 235L345 330 365 450M318 230L355 450"/>
                    <path d="M132 393L415 470" stroke-width="8"/>
                    <path d="M88 236L372 306" stroke-width="8"/><path d="M90 246L375 316"/>
                </g>
                <path d="M228 104L325 174Q398 245 426 312L457 488Q457 502 442 500L120 410 82 240Q79 200 105 165 130 125 215 104z" fill="none" stroke="#0ff" stroke-width="7" stroke-linejoin="round"/>
                <path d="M248 240L160 225M248 240L322 172" stroke="#666" stroke-width="3" fill="none"/>
                <path d="M230 145L248 245" stroke="#c81e1e" stroke-width="3" fill="none"/>
                <text x="224" y="142" fill="#c81e1e">z</text><text x="318" y="172" fill="#555">x</text><text x="143" y="215" fill="#555">y</text>
            </svg>
            <svg class="tripod" viewBox="0 0 44 44">
                <path d="M23 38V18" stroke="#0000c8"/><path d="M23 38L33 24" stroke="#b41414"/><path d="M23 38L6 33" stroke="#0a960a"/>
                <text x="21" y="16" fill="#0000c8">z</text><text x="31" y="23" fill="#b41414">x</text><text x="1" y="31" fill="#0a960a">y</text>
            </svg>
            <svg class="compass" viewBox="0 0 40 44"><path d="M22 1Q44 16 26 40l-6-4Q34 18 16 6z" fill="#6c7076"/><text x="32" y="32" fill="#b0b0b0">s</text></svg>
        </section>

        <aside class="command">
            <div class="panel-tabs">
                <button aria-label="Create"><svg><use href="#plus"/></svg></button><button class="active" aria-label="Modify"><svg><use href="#modify"/></svg></button><button aria-label="Hierarchy"><svg><use href="#chier"/></svg></button><button aria-label="Motion"><svg><use href="#motion"/></svg></button><button aria-label="Display"><svg><use href="#display"/></svg></button><button class="more" aria-label="More"><i class="caret"></i></button>
            </div>
            <div class="object-name"><input type="text" value="Window" aria-label="Object name"><button aria-label="Object color"></button></div>
            <span class="drop modlist"><select aria-label="Modifier list"><option>Modifier List</option></select></span>
            <ul class="stack">
                <li class="active"><svg class="i16"><use href="#eye"/></svg><em>TurboSmooth</em></li>
                <li><i class="tri"></i><span>Editable Poly</span></li>
            </ul>
            <div class="stack-tools">
                <button aria-label="Pin stack"><svg><use href="#pin"/></svg></button><i class="sep"></i><button class="on" aria-label="Show end result"><svg><use href="#tube"/></svg></button><i class="sep"></i><button aria-label="Make unique"><svg><use href="#unique"/></svg></button><button aria-label="Remove modifier"><svg><use href="#trash"/></svg></button><i class="sep"></i><button aria-label="Configure modifier sets"><svg><use href="#config"/></svg></button>
            </div>
            <div class="splitter"></div>
            <div class="rollout">
                <h2><i class="caret"></i>TurboSmooth<i class="dots"></i></h2>
                <fieldset class="main-group">
                    <legend>Main</legend>
                    <div class="num"><label for="iters">Iterations:</label><span class="spinbox"><input id="iters" type="text" value="0"><svg><use href="#spin"/></svg></span></div>
                    <div class="num"><input type="checkbox" id="riters" checked><label for="riters">Render Iters:</label><span class="spinbox"><input type="text" value="2" aria-label="Render iterations"><svg><use href="#spin"/></svg></span></div>
                    <div class="check"><input type="checkbox" id="isoline"><label for="isoline">Isoline Display</label></div>
                    <div class="check"><input type="checkbox" id="normals"><label for="normals">Explicit Normals</label></div>
                </fieldset>
                <fieldset class="surface-group">
                    <legend>Surface Parameters</legend>
                    <div class="check"><input type="checkbox" id="smooth" checked><label for="smooth">Smooth Result</label></div>
                    <p>Separate by:</p>
                    <div class="check sub"><input type="checkbox" id="materials"><label for="materials">Materials</label></div>
                    <div class="check sub"><input type="checkbox" id="groups"><label for="groups">Smoothing Groups</label></div>
                </fieldset>
                <fieldset class="update-group">
                    <legend>Update Options</legend>
                    <div class="check"><input type="radio" name="update" id="always" checked><label for="always">Always</label></div>
                    <div class="check"><input type="radio" name="update" id="rendering"><label for="rendering">When Rendering</label></div>
                    <div class="check"><input type="radio" name="update" id="manually"><label for="manually">Manually</label></div>
                    <button class="btn">Update</button>
                </fieldset>
            </div>
        </aside>
    </main>

    <footer class="timeline">
        <i class="grip"></i>
        <div class="timeline-body">
            <div class="slider"><button class="btn">&lt;</button><button class="btn thumb">0 / 225</button><button class="btn">&gt;</button></div>
            <div class="track">
                <svg class="curve"><use href="#curve"/></svg>
                <div class="ruler"><svg id="ticks"></svg><div id="frames"></div></div>
            </div>
        </div>
    </footer>

    <div class="status">
        <div class="listener"><input class="macro" type="text" aria-label="Macro recorder"><input type="text" value="MAXScript Mini Listener" aria-label="MAXScript listener"></div>
        <div class="prompt"><p>1 Object Selected</p><p>Click or click-and-drag to select objects</p></div>
        <div class="coords">
            <div class="line">
                <button aria-label="Isolate"><svg><use href="#isolate"/></svg></button><button aria-label="Lock selection"><svg><use href="#lock"/></svg></button><button aria-label="Absolute mode"><svg><use href="#abs"/></svg></button>
                <label for="cx">X:</label><input id="cx" type="text" value="816,073cm"><label for="cy">Y:</label><input id="cy" type="text" value="-423,016cm"><label for="cz">Z:</label><input id="cz" type="text" value="0,0cm">
                <span>Grid = 10,0cm</span>
            </div>
            <div class="line tag"><i class="sep"></i><svg><use href="#cube"/></svg><span>Add Time Tag</span></div>
        </div>
        <div class="playback">
            <div class="line"><button aria-label="Start"><svg><use href="#first"/></svg></button><i class="sep"></i><button aria-label="Previous"><svg><use href="#prev"/></svg></button><button class="fly" aria-label="Play"><svg><use href="#play"/></svg></button><button aria-label="Next"><svg><use href="#next"/></svg></button><i class="sep"></i><button aria-label="End"><svg><use href="#last"/></svg></button></div>
            <div class="line"><button aria-label="Key mode"><svg><use href="#keymode"/></svg></button><i class="sep"></i><span class="spinbox"><input type="text" value="0" aria-label="Current frame"><svg><use href="#spin"/></svg></span><i class="sep"></i><button aria-label="Time configuration"><svg><use href="#clock"/></svg></button></div>
        </div>
        <button class="btn bigkey" aria-label="Set keys"><svg><use href="#setkey"/></svg></button>
        <div class="keys"><button class="btn">Auto Key</button><button class="btn">Set Key</button></div>
        <div class="keyopts">
            <span class="drop"><select aria-label="Key target"><option>Selected</option></select></span>
            <div class="line"><button class="fly" aria-label="Tangents"><svg><use href="#tangent"/></svg></button><button class="btn">Key Filters...</button></div>
        </div>
        <div class="nav">
            <button aria-label="Zoom"><svg><use href="#mag"/></svg></button><button aria-label="Zoom all"><svg><use href="#magall"/></svg></button><button class="fly" aria-label="Zoom extents"><svg><use href="#extents"/></svg></button><button class="fly" aria-label="Zoom extents all"><svg><use href="#extall"/></svg></button>
            <button class="fly" aria-label="Field of view"><svg><use href="#fov"/></svg></button><button class="fly" aria-label="Walk"><svg><use href="#walk"/></svg></button><button class="fly" aria-label="Orbit"><svg><use href="#orbit"/></svg></button><button aria-label="Maximize viewport"><svg><use href="#maxi"/></svg></button>
        </div>
    </div>
    <div class="taskbar"></div>

    <section class="window explorer">
        <header>
            <svg class="i16"><use href="#max"/></svg><span class="caption">Scene Explore...</span>
            <div class="winbtns">
                <button aria-label="Minimize"><svg viewBox="0 0 12 12"><path d="M1 6.500h10"/></svg></button><button aria-label="Maximize"><svg viewBox="0 0 12 12"><path d="M1.500 1.500h9v9h-9z"/></svg></button><button aria-label="Close"><svg viewBox="0 0 12 12"><path d="M1 1l10 10M11 1L1 11"/></svg></button>
            </div>
        </header>
        <nav><a href="#">Select</a><a href="#">Display</a><a href="#">Edit</a><a href="#">Customize</a></nav>
        <div class="search">
            <input type="text" aria-label="Find">
            <button class="clear" aria-label="Clear"><svg viewBox="0 0 12 12"><path d="M1 1l10 10M11 1L1 11" stroke="#aaa" stroke-width="2"/></svg></button>
            <button class="on" aria-label="Filter"><svg><use href="#funnel"/></svg></button><i class="sep"></i><span class="chev">»</span>
        </div>
        <div class="explorer-body">
            <div class="side" id="side"></div>
            <div class="tree">
                <div class="tree-head"><span>Name (Sorted Ascending)</span><i class="up"></i></div>
                <div class="root"><i class="down"></i><svg class="i16"><use href="#eye"/></svg><svg class="i16"><use href="#shapes"/></svg><span>Medieval_Castle_Study_Empty</span></div>
                <ul id="nodes"></ul>
                <div class="scroll"><svg viewBox="0 0 8 10"><path d="M6 1L2 5l4 4"/></svg><i></i><svg viewBox="0 0 8 10"><path d="M2 1l4 4-4 4"/></svg></div>
            </div>
        </div>
        <div class="explorer-foot">
            <input type="text" value="Scene Explorer" aria-label="Explorer name"><i class="caret"></i><i class="sep"></i>
            <button aria-label="Layers"><svg><use href="#layers"/></svg></button><button class="on" aria-label="Hierarchy"><svg><use href="#hier"/></svg></button><i class="sep"></i><span class="chev">»</span>
        </div>
    </section>

    <section class="window assets">
        <header>
            <svg class="i16"><use href="#max"/></svg><span class="caption">Asset Tracking</span>
            <div class="winbtns">
                <button aria-label="Minimize"><svg viewBox="0 0 12 12"><path d="M1 6.500h10"/></svg></button><button aria-label="Maximize"><svg viewBox="0 0 12 12"><path d="M1.500 1.500h9v9h-9z"/></svg></button><button aria-label="Close"><svg viewBox="0 0 12 12"><path d="M1 1l10 10M11 1L1 11"/></svg></button>
            </div>
        </header>
        <nav><a href="#">Server</a><a href="#">File</a><a href="#">Paths</a><a href="#">Bitmap Performance and Memory</a><a href="#">Options</a></nav>
        <div class="asset-tools">
            <button aria-label="Refresh"><svg><use href="#refresh"/></svg></button><button aria-label="Status log"><svg><use href="#doc"/></svg></button><button aria-label="Tree view"><svg><use href="#treeview"/></svg></button><button class="on" aria-label="Table view"><svg><use href="#grid"/></svg></button>
            <i class="space"></i><button aria-label="Web help"><svg><use href="#qglobe"/></svg></button><button aria-label="Context help"><svg><use href="#qarrow"/></svg></button>
        </div>
        <div class="asset-list">
            <table>
                <thead><tr><th>Name</th><th>Status</th></tr></thead>
                <tbody id="assets"></tbody>
            </table>
            <div class="scroll"><svg viewBox="0 0 8 10"><path d="M6 1L2 5l4 4"/></svg><i></i><svg viewBox="0 0 8 10"><path d="M2 1l4 4-4 4"/></svg></div>
        </div>
        <input class="asset-path" type="text" aria-label="Path">
    </section>

    <script src="script.js"></script>
</body>

</html>
```
FILE: script.js
```js
// icons with lettering are drawn in place, the rest come from the sprite
var lettered = {
    snap3: '<svg viewBox="0 0 24 24"><text class="digit" x="0" y="22">3</text><use href="#magnet" x="12" y="0" width="12" height="12"/></svg>',
    maxfile: '<svg viewBox="0 0 16 16"><path d="M1 1h11l3 3v11H1z" fill="#f4f8fa"/><path d="M0 8h16v7H0z" fill="#2c5f80"/><text class="ext" x="1" y="14">MAX</text></svg>'
};

function icon(id) {
    return lettered[id] || '<svg><use href="#' + id + '"/></svg>';
}

function pad(n) {
    return String(n).padStart(3, '0');
}

// toolbars: "|" is a separator, "*" a pressed button, "+" a flyout
document.querySelectorAll('.tools').forEach(function (bar) {
    bar.innerHTML = bar.dataset.icons.split(' ').map(function (name) {
        if (name === '|') return '<i class="sep"></i>';
        var id = name.replace(/[*+]/, '');
        var cls = name.endsWith('*') ? 'on' : name.endsWith('+') ? 'fly' : '';
        return '<button class="' + cls + '" aria-label="' + id + '">' + icon(id) + '</button>';
    }).join('');
});

// explorer side filters
var side = ['e1', 'e2', 'e3', 'e4', 'e5', 'e6', 'shapes', 'e8', 'e9', 'e10', 'e11', 'e12'].map(function (id) {
    return '<button class="on" aria-label="Filter ' + id + '">' + icon(id) + '</button>';
});
side.push('<hr>');
['p1', 'p2', 'p3', '', 'p4', 'p5', 'p6'].forEach(function (id) {
    side.push(id ? '<button aria-label="' + id + '">' + icon(id) + '</button>' : '<hr>');
});
document.getElementById('side').innerHTML = side.join('');

// scene nodes
var nodes = ['2nd_Floor', 'Barrel', 'Boards_003', 'Boards_004', 'Boards_005'];
for (var i = 1; i <= 9; i++) nodes.push('Candle_fire_' + pad(i));
nodes.push('Candle_Holders');
for (i = 1; i <= 8; i++) nodes.push('Candle_Holders' + pad(i));
nodes.push('Carpet', 'Door', 'Roof', 'Sideboard_001', 'Sideboard_002', 'Spokes_001', 'Spokes_002', 'Spokes_003', 'Stairs_001', 'Stairs_002');
for (i = 1; i <= 9; i++) nodes.push('VRayLight' + pad(i));
nodes.push('Walls_Floor', 'Window');
document.getElementById('nodes').innerHTML = nodes.map(function (name) {
    var type = name.startsWith('VRay') ? 'lamp' : 'dot';
    return '<li' + (name === 'Window' ? ' class="active"' : '') + '>' + icon('eye') + icon(type) + '<span>' + name + '</span></li>';
}).join('');

// asset table: icon, depth, name, status
var rows = [
    ['vault', 0, 'Autodesk Vault', 'Logged Out ...'],
    ['maxfile', 1, 'Medieval_Castle_Study_Empty_max_vray.max', 'Ok'],
    ['maps', 2, 'Maps / Shaders', '']
];
var files = {
    'Contain_': ['Diffuse', 'Emissive', 'Fog', 'Frensel', 'Glossiness', 'Normal', 'Refraction', 'Specular'],
    'Enviroment_': ['Diffuse', 'Frensel', 'Glossiness', 'Normal', 'Specular'],
    'Melted_Candles_new_': ['Emission', 'fire_Diffuse', 'Fresnel', 'Glossiness', 'IOR', 'Reflection', 'Refract'],
    'sideboard_': ['Diffuse', 'Glossiness', 'IOR', 'Normal', 'Reflection']
};
Object.keys(files).forEach(function (prefix) {
    files[prefix].forEach(function (map) {
        rows.push(['png', 3, prefix + map + '.png', 'Ok']);
    });
});
var html = rows.map(function (r) {
    return '<tr><td class="depth' + r[1] + '">' + icon(r[0]) + r[2] + '</td><td>' + r[3] + '</td></tr>';
}).join('');
for (i = 0; i < 5; i++) html += '<tr><td></td><td></td></tr>';
document.getElementById('assets').innerHTML = html + '<tr class="tail"><td></td><td></td></tr>';

// time ruler, 226 frames
var ticks = '', frames = '';
for (i = 0; i <= 225; i++) {
    var x = ((i + 0.5) / 226 * 100) + '%';
    ticks += '<line x1="' + x + '" x2="' + x + '" y1="0" y2="' + (i % 10 ? 12 : 25) + '"/>';
    if (i % 10 === 0) frames += '<span>' + i + '</span>';
}
document.getElementById('ticks').innerHTML = ticks;
document.getElementById('frames').innerHTML = frames;
```
FILE: styles.css
```css
:root {
    --bg: #444;
    --field: #646464;
    --blue: #5f8bc4;
    --text: #e0e0e0;
    --segoe: Roboto, "Open Sans", sans-serif;
    --tahoma: "DejaVu Sans Condensed", "DejaVu Sans", sans-serif;
}

* {
    box-sizing: border-box;
}

body {
    margin: 0;
    min-height: 100vh;
    display: flex;
    flex-direction: column;
    background: var(--bg);
    color: var(--text);
    font: 11px/16px var(--tahoma);
    overflow: hidden;
    position: relative;
}

.sprite {
    position: absolute;
    width: 0;
    height: 0;
}

p, ul, dl, dd, h2, fieldset {
    margin: 0;
    padding: 0;
}

ul {
    list-style: none;
}

a {
    color: inherit;
    text-decoration: none;
}

button, input, select {
    font: inherit;
    color: inherit;
    border: 0;
    background: none;
    padding: 0;
    margin: 0;
    border-radius: 0;
    appearance: none;
    min-width: 0;
}

button {
    display: flex;
    align-items: center;
    justify-content: center;
    flex: none;
}

svg {
    flex: none;
    width: 16px;
    height: 16px;
    display: block;
}

.digit {
    font: bold 26px "Liberation Sans", sans-serif;
    fill: #d0d0d0;
}

.ext {
    font: bold 6px "Liberation Sans", sans-serif;
    fill: #fff;
}

.on {
    background: var(--blue);
}

.sep {
    flex: none;
    width: 2px;
    margin: 0 2px;
    height: 17px;
    background: #1d1d1d;
}

.grip {
    flex: none;
    width: 3px;
    background: repeating-linear-gradient(#8a8a8a 0 1px, transparent 1px 2px);
}

.caret {
    flex: none;
    border: 3px solid transparent;
    border-top: 5px solid #d8d8d8;
    border-bottom: 0;
}

.btn {
    background: var(--field);
    border-radius: 3px;
    color: var(--text);
}

.drop {
    position: relative;
    display: flex;
    background: var(--field);
}

.drop select {
    flex: 1;
    padding: 0 14px 0 5px;
}

.drop::after {
    content: "";
    position: absolute;
    right: 7px;
    top: calc(50% - 2px);
    border: 3px solid transparent;
    border-top: 5px solid #d8d8d8;
    border-bottom: 0;
}

/* title and menu */
.titlebar {
    height: 23px;
    display: flex;
    align-items: center;
    padding: 0 3px 0 2px;
    gap: 5px;
    background: #fff;
    color: #000;
    font: 12px/16px var(--segoe);
}

.caption {
    white-space: nowrap;
}

.winbtns {
    display: flex;
    margin-left: auto;
}

.winbtns button {
    width: 45px;
    height: 20px;
}

.winbtns svg {
    width: 12px;
    height: 12px;
    fill: none;
    stroke: currentColor;
}

.menubar {
    height: 23px;
    display: flex;
    align-items: center;
    padding-left: 12px;
    gap: 26px;
    background: linear-gradient(#555, #444);
    border-bottom: 1px solid #111;
    color: #f0f0f0;
    font-size: 12px;
    white-space: nowrap;
}

.signin {
    margin-left: auto;
    width: 120px;
    height: 22px;
    background: #cfcfcf;
    color: #111;
    padding: 0 7px 0 2px;
    gap: 3px;
    justify-content: flex-start;
}

.signin .caret {
    margin-left: auto;
    border-top-color: #111;
}

.menubar label {
    margin-left: -16px;
    margin-right: -22px;
    color: #ccc;
    font-size: 11px;
}

.workspace {
    width: 136px;
    height: 20px;
    margin-right: 3px;
    font-size: 11px;
}

/* toolbars */
.toolbar {
    display: flex;
    align-items: center;
    height: 34px;
    padding-left: 3px;
}

.toolbar > .grip {
    height: 28px;
    margin-right: 3px;
}

.tools {
    display: flex;
    align-items: center;
}

.tools button {
    width: 32px;
    height: 30px;
    position: relative;
    border-radius: 3px;
}

.tools svg {
    width: 24px;
    height: 24px;
}

.fly {
    position: relative;
}

.fly::after {
    content: "";
    position: absolute;
    right: 0;
    bottom: 0;
    border: 2px solid #d8d8d8;
    border-top-color: transparent;
    border-left-color: transparent;
}

.toolbar .drop {
    flex: none;
    height: 20px;
    margin: 0 1px;
    align-self: flex-start;
    margin-top: 4px;
}

.filter {
    width: 68px;
}

.sets {
    width: 118px;
}

.tools.render {
    margin-left: 249px;
}

.tools.render + .grip {
    margin: 0 3px 0 4px;
}

.toolbar .path {
    width: 221px;
    height: 29px;
    margin-top: 2px;
}

.project button {
    width: 30px;
}

.vray {
    height: 32px;
    align-items: flex-start;
}

.vray .grip {
    margin-top: 2px;
}

.cut {
    height: 15px;
    overflow: hidden;
    align-items: flex-start;
}

/* ribbon */
.ribbon {
    display: flex;
    height: 45px;
    padding-left: 2px;
    gap: 4px;
}

.ribbon > .grip {
    height: 38px;
    margin-top: 2px;
}

.ribbon-body {
    flex: 1;
}

.ribbon-tabs {
    height: 21px;
    display: flex;
    align-items: flex-end;
    background: #525252;
    border-top: 1px solid #6a6a6a;
    border-bottom: 1px solid #2c2c2c;
    padding-left: 4px;
    font-size: 12px;
    color: #a8a8a8;
}

.ribbon-tabs button {
    height: 18px;
    padding: 0 22px;
}

.ribbon-tabs .active {
    width: 81px;
    padding: 0 0 0 11px;
    background: linear-gradient(#666, #555);
    border: 1px solid #333;
    border-bottom: 0;
    color: #ddd;
}

.ribbon-tabs > .caret {
    margin: 0 0 6px 5px;
    border-top-width: 3px;
}

.pill {
    width: 24px;
    height: 8px;
    margin: 0 0 5px 8px;
    background: #eee;
    border-radius: 2px;
    display: flex;
    align-items: center;
    justify-content: center;
}

.pill .caret {
    border-top: 3px solid #222;
}

.ribbon-panel {
    height: 19px;
    background: linear-gradient(#484848, #333);
    border-bottom: 1px solid #2a2a2a;
    font-size: 12px;
    padding-left: 2px;
}

.ribbon-panel button {
    height: 18px;
    width: 108px;
    border: 1px solid #666;
    background: #444;
}

/* viewport */
.workspace-area {
    flex: 1;
    display: flex;
}

.viewport {
    flex: 1;
    position: relative;
    background: linear-gradient(#171717, #333 45%, #454545 75%, #4b4b4b);
    box-shadow: inset 0 0 0 2px #7d6823;
    padding: 8px 5px;
}

.vp-label {
    color: #ccc;
}

.stats {
    display: grid;
    grid-template-columns: 40px 100px;
    grid-auto-rows: 16px;
    margin: 15px 0 0 10px;
    color: #e2d22c;
}

.model, .castle-window, .tripod, .compass {
    position: absolute;
    fill: none;
}

.model {
    left: 0;
    top: 0;
    width: 700px;
    height: 785px;
}

.model path {
    vector-effect: non-scaling-stroke;
}

.solid {
    fill: #000;
    stroke: #3c3c3c;
}

.wire {
    stroke: #303030;
}

.bracket {
    stroke: #f28aa4;
}

.castle-window {
    left: 230px;
    top: 343px;
    width: 180px;
    height: 190px;
    font-size: 33px;
}

.tripod {
    left: 3px;
    bottom: 20px;
    width: 44px;
    height: 44px;
}

.compass {
    right: 19px;
    top: 48px;
    width: 40px;
    height: 44px;
}

/* command panel */
.command {
    width: 193px;
    padding: 3px 2px 0 4px;
}

.panel-tabs {
    display: flex;
    gap: 2px;
    padding: 4px 0 0 1px;
    border-top: 2px dotted #777;
}

.panel-tabs button {
    width: 30px;
    height: 27px;
    background: #3a3a3a;
    border-radius: 4px 4px 0 0;
}

.panel-tabs .active {
    background: #474747;
}

.panel-tabs svg {
    width: 18px;
    height: 18px;
}

.panel-tabs .more {
    width: 14px;
    margin-left: auto;
    background: var(--field);
    border-radius: 3px;
}

.panel-tabs .more .caret {
    border-width: 5px 4px 0;
}

.object-name {
    display: flex;
    gap: 6px;
    margin: 8px 4px 0 6px;
}

.object-name input {
    flex: 1;
    height: 19px;
    background: var(--field);
    padding-left: 5px;
}

.object-name button {
    width: 16px;
    height: 19px;
    border: 1px solid #111;
    background: #505050;
}

.modlist {
    height: 20px;
    margin: 10px 3px 6px 6px;
}

.modlist select {
    padding-left: 2px;
}

.stack {
    height: 126px;
    margin: 0 3px 0 6px;
    border: 1px solid #fff;
    outline: 1px solid #777;
    color: #fff;
}

.stack li {
    display: flex;
    align-items: center;
    height: 17px;
    border-bottom: 1px solid #8a8a8a;
    padding-left: 4px;
}

.stack .i16 {
    height: 12px;
}

.stack em {
    flex: 1;
    align-self: stretch;
    background: var(--blue);
    padding-left: 23px;
}

.tri {
    border: 4px solid transparent;
    border-left: 6px solid #ccc;
    border-right: 0;
    margin: 0 8px 0 3px;
}

.stack-tools {
    display: flex;
    align-items: center;
    height: 24px;
    margin: 5px 0 0 4px;
}

.stack-tools .sep {
    margin: 0 5px;
}

.stack-tools button {
    width: 26px;
    height: 22px;
    border-radius: 3px;
}

.stack-tools .on {
    width: 22px;
}

.splitter {
    height: 1px;
    margin: 17px 12px 6px 10px;
    background: linear-gradient(90deg, #777 42%, transparent 42% 45%, #ccc 45% 53%, transparent 53% 56%, #777 56%);
}

.rollout {
    width: 171px;
    height: 333px;
    margin-left: 5px;
    padding: 3px 9px;
    background: #515151;
    border-radius: 3px;
    color: #f0f0f0;
}

.rollout h2 {
    display: flex;
    align-items: center;
    gap: 7px;
    font: bold 12px/16px var(--tahoma);
    margin: 0 0 0 -4px;
}

.rollout h2 .caret {
    border-top-color: #aaa;
}

.dots {
    width: 6px;
    height: 5px;
    margin-left: auto;
    background: repeating-linear-gradient(#888 0 1px, transparent 1px 2px);
}

.rollout fieldset {
    min-width: 0;
    border: 1px solid #383838;
    border-radius: 2px;
    padding: 0 4px 0 8px;
}

.rollout legend {
    padding: 0 3px;
    margin-left: -7px;
    height: 16px;
}

.main-group {
    height: 111px;
}

.surface-group {
    height: 95px;
}

.update-group {
    height: 101px;
}

.num {
    display: flex;
    align-items: center;
    justify-content: flex-end;
    height: 22px;
    gap: 2px;
}

.num input[type=checkbox] {
    margin-right: auto;
}

.main-group .num + .check {
    margin-top: 7px;
}

.num .spinbox {
    margin-left: 4px;
}

.spinbox {
    display: flex;
    align-items: center;
    width: 51px;
    height: 16px;
    background: var(--field);
    padding: 0 2px;
    border: 1px solid #444;
}

.spinbox input {
    flex: 1;
    width: 20px;
}

.spinbox svg {
    width: 8px;
    height: 12px;
}

.check {
    display: flex;
    align-items: center;
    gap: 2px;
    height: 21px;
}

.surface-group .check {
    height: 18px;
}

.surface-group p {
    line-height: 17px;
}

.sub {
    padding-left: 31px;
}

input[type=checkbox] {
    width: 11px;
    height: 11px;
    background: var(--field);
    outline: 1px solid #474747;
    position: relative;
    flex: none;
}

input[type=checkbox]:checked::after {
    content: "";
    position: absolute;
    left: 3px;
    top: 0;
    width: 3px;
    height: 6px;
    border: solid #ddd;
    border-width: 0 2px 2px 0;
    transform: rotate(40deg);
}

.update-group .check {
    height: 17px;
    gap: 6px;
    padding-left: 7px;
}

input[type=radio] {
    width: 12px;
    height: 12px;
    border-radius: 50%;
    background: var(--field);
    border: 1px solid #484848;
}

input[type=radio]:checked {
    background: radial-gradient(#ddd 40%, var(--field) 50%);
}

.update-group .btn {
    width: 95px;
    height: 19px;
    margin: 5px 0 0 18px;
    color: #ccc;
}

/* timeline */
.timeline {
    height: 52px;
    display: flex;
    padding-left: 2px;
}

.timeline > .grip {
    height: 44px;
    margin: 6px 4px 0 0;
}

.timeline-body {
    flex: 1;
}

.slider {
    height: 26px;
    display: flex;
    gap: 2px;
    padding: 5px 1px;
}

.slider .btn {
    width: 14px;
    height: 16px;
    font-size: 12px;
}

.slider .thumb {
    width: 123px;
    font-size: 11px;
}

.track {
    display: flex;
    height: 26px;
    border-top: 1px solid #111;
}

.curve {
    width: 20px;
    margin: 5px 18px 0 13px;
}

.ruler {
    flex: 1;
    height: 25px;
    margin-right: 50px;
    position: relative;
    background: linear-gradient(90deg, #8a7e1c 8px, #292929 8px);
    color: #bdbdbd;
}

#ticks {
    width: 100%;
    height: 25px;
    stroke: #626262;
    shape-rendering: crispEdges;
}

#frames {
    position: absolute;
    inset: 12px 0 auto -2%;
    display: flex;
}

#frames span {
    width: calc(98.04% * 10 / 226);
    text-align: center;
    line-height: 14px;
}

/* status bar */
.status {
    height: 56px;
    display: flex;
    padding: 4px 8px 0 4px;
    color: #f0f0f0;
}

.listener {
    width: 97px;
}

.listener input {
    display: block;
    width: 97px;
    height: 22px;
    margin: 2px 0 1px;
    background: #fff;
    border: 2px solid #8c8c8c;
    border-right-color: #fff;
    border-bottom-color: #fff;
    color: #777;
    padding-left: 2px;
    font: 12px/16px "Liberation Mono", monospace;
}

.listener .macro {
    background: #dbc3c5;
}

.prompt {
    flex: 1;
    height: 48px;
    margin-left: 5px;
    padding: 7px 0 0 4px;
    border-left: 2px solid #1a1a1a;
}

.prompt p {
    margin-bottom: 9px;
}

.line {
    display: flex;
    align-items: center;
    height: 24px;
}

.coords {
    width: 448px;
}

.coords .line {
    height: 26px;
}

.coords button {
    margin: 0 5px 0 6px;
}

.coords label {
    width: 11px;
    margin: 0 3px 0 2px;
}

.coords input {
    width: 58px;
    height: 18px;
    background: #5b5b5b;
    border: 1px solid #4c4c4c;
    color: #8e8e8e;
    padding-left: 2px;
    margin-right: 11px;
}

.coords .line > span {
    margin-left: 3px;
}

.tag {
    padding-left: 306px;
}

.coords .tag > span {
    margin-left: 7px;
}

.playback {
    width: 130px;
}

.playback button {
    width: 20px;
    height: 20px;
}

.playback .line:first-child button {
    margin-right: 2px;
}

.playback .spinbox {
    width: 70px;
    height: 18px;
}

.bigkey {
    width: 43px;
    height: 43px;
    margin: 3px 4px 0 0;
}

.status .bigkey svg {
    width: 30px;
    height: 30px;
}

.keys {
    width: 47px;
    margin: 3px 4px 0 0;
}

.keys .btn {
    width: 47px;
    height: 20px;
    margin-bottom: 2px;
}

.keyopts {
    width: 115px;
    margin: 3px 10px 0 0;
}

.keyopts .drop {
    height: 20px;
}

.keyopts .btn {
    flex: 1;
    height: 20px;
    margin-left: 5px;
}

.keyopts .fly {
    width: 20px;
    height: 18px;
}

.nav {
    display: grid;
    grid-template-columns: repeat(4, 23px);
    grid-auto-rows: 23px;
    padding-top: 2px;
}

.nav button {
    width: 19px;
}

.nav .fly::after {
    right: -1px;
    bottom: 3px;
}

.taskbar {
    height: 30px;
    background: linear-gradient(#55504e, #5e5b58 40%, #666460 60%, #504b48 85%);
    border-bottom: 2px solid #5d7488;
}

/* floating windows */
.window {
    position: absolute;
    background: var(--bg);
    box-shadow: 0 0 0 1px #555, 0 2px 10px 2px rgba(0, 0, 0, .5);
}

.window header {
    display: flex;
    align-items: center;
    gap: 5px;
    height: 30px;
    padding: 0 2px 0 8px;
    background: #fff;
    color: #000;
    font: 12px/16px var(--segoe);
}

.window nav {
    display: flex;
    align-items: center;
}

.explorer {
    left: 980px;
    top: 3px;
    width: 250px;
    height: 965px;
}

.explorer header {
    color: #999;
    gap: 4px;
}

.explorer .winbtns {
    margin-left: -4px;
}

.explorer nav {
    height: 24px;
    gap: 17px;
    padding-left: 15px;
    color: #fff;
    font: 12px/16px var(--segoe);
}

.search, .explorer-foot {
    display: flex;
    align-items: center;
    height: 24px;
    padding: 0 3px 0 4px;
}

.search input {
    width: 150px;
    height: 23px;
    border: 1px solid #666;
}

.search .clear {
    width: 25px;
}

.clear svg {
    width: 12px;
}

.search .on, .explorer-foot .on {
    width: 24px;
    height: 24px;
}

.search .on svg {
    width: 18px;
    height: 18px;
}

.search .sep, .explorer-foot .sep {
    height: 22px;
    background: #888;
    border-left: 1px solid #222;
}

.chev {
    margin: -12px 0 0 auto;
    color: #5a5ab0;
    font-size: 14px;
}

.explorer-body {
    display: flex;
    height: 856px;
    margin-top: 3px;
}

.side {
    width: 25px;
    padding-top: 4px;
}

.side button {
    width: 22px;
    height: 20px;
    margin-bottom: 3px;
}

.side svg {
    fill: #d0d0d0;
    stroke: #383c40;
}

.side hr {
    margin: 2px 2px 4px;
    width: 18px;
    border: 0;
    height: 2px;
    background: #888;
}

.tree {
    flex: 1;
    display: flex;
    flex-direction: column;
    border-left: 1px solid #333;
    color: #f4f4f4;
}

.tree-head {
    display: flex;
    align-items: center;
    justify-content: space-between;
    height: 21px;
    margin-right: 3px;
    padding: 0 2px 0 0;
    border: 1px solid #5a5a5a;
}

.up, .down {
    border: 4px solid transparent;
    border-bottom: 6px solid #fff;
    border-top: 0;
}

.down {
    border: 5px solid transparent;
    border-top: 6px solid #fff;
    border-bottom: 0;
    margin: 0 4px;
}

.root {
    display: flex;
    align-items: center;
    height: 19px;
}

.root svg:nth-child(2) {
    width: 14px;
}

.root span {
    flex: 1;
    margin-left: 2px;
    padding-left: 2px;
    background: #4c4c4c;
    line-height: 18px;
}

#nodes {
    margin-left: 26px;
    background: linear-gradient(90deg, #666 1px, transparent 1px) no-repeat 0 0 / 1px 100%;
}

#nodes li {
    display: flex;
    align-items: center;
    height: 18px;
}

#nodes li::before {
    content: "";
    width: 9px;
    border-top: 1px dotted #777;
}

#nodes svg:nth-child(1) {
    width: 16px;
    height: 11px;
}

#nodes svg:nth-child(2) {
    width: 12px;
    height: 12px;
    margin: 0 1px;
}

#nodes span {
    flex: 1;
    margin-left: 2px;
    padding-left: 3px;
    background: #4c4c4c;
    line-height: 18px;
}

#nodes li:nth-child(odd) span {
    background: #595959;
}

#nodes li.active span {
    background: #808080;
}

.scroll {
    display: flex;
    align-items: center;
    height: 17px;
    margin-top: auto;
    background: #efefef;
}

.scroll svg {
    width: 17px;
    height: 10px;
    fill: none;
    stroke: #444;
    stroke-width: 2;
}

.scroll i {
    height: 15px;
    width: 148px;
    margin-right: auto;
    background: #cdcdcd;
}

.explorer-foot {
    margin-top: 1px;
}

.explorer-foot input {
    width: 145px;
    height: 23px;
    border: 1px solid #666;
    color: #ff0;
    font: 12px/16px var(--segoe);
    padding-left: 1px;
}

.explorer-foot .caret {
    margin: 0 4px;
    border-top-color: #000;
}

.explorer-foot button {
    width: 24px;
}

.assets {
    left: 1300px;
    top: 147px;
    width: 395px;
    height: 786px;
    font: 12px/16px var(--segoe);
    color: #f4f4f4;
}

.assets nav {
    height: 20px;
    gap: 12px;
    padding-left: 7px;
    background: #fff;
    color: #000;
}

.asset-tools {
    display: flex;
    align-items: center;
    height: 30px;
    padding: 2px 3px 0 1px;
}

.asset-tools button {
    width: 27px;
    height: 22px;
}

.asset-tools .on {
    width: 22px;
    margin-left: 2px;
    border-radius: 3px;
}

.space {
    flex: 1;
}

.asset-list {
    margin: 0 3px;
    border: 1px solid #8c8c94;
    padding: 1px;
}

table {
    width: 100%;
    table-layout: fixed;
    border-collapse: separate;
    border-spacing: 0;
}

th {
    height: 25px;
    background: #fff;
    color: #000;
    font-weight: normal;
    text-align: left;
    padding: 0 6px;
}

th:first-child {
    width: 302px;
    border-right: 1px solid #ddd;
}

td {
    height: 19px;
    padding: 0 0 0 5px;
    border-bottom: 1px solid #fff;
    line-height: 18px;
    white-space: nowrap;
    overflow: hidden;
}

td:first-child {
    border-right: 1px solid #fff;
}

td svg {
    display: inline-block;
    vertical-align: top;
    margin: 1px 2px 0 0;
}

td.depth0 {
    padding-left: 23px;
}

td.depth1 {
    padding-left: 39px;
}

td.depth2 {
    padding-left: 55px;
}

td.depth3 {
    padding-left: 71px;
}

.tail td {
    height: 4px;
    border-bottom: 0;
}

.asset-list .scroll i {
    width: 240px;
}

.asset-path {
    display: block;
    width: 387px;
    height: 23px;
    margin: 4px;
    border: 1px solid #fff;
    outline: 1px solid #777;
}
```
